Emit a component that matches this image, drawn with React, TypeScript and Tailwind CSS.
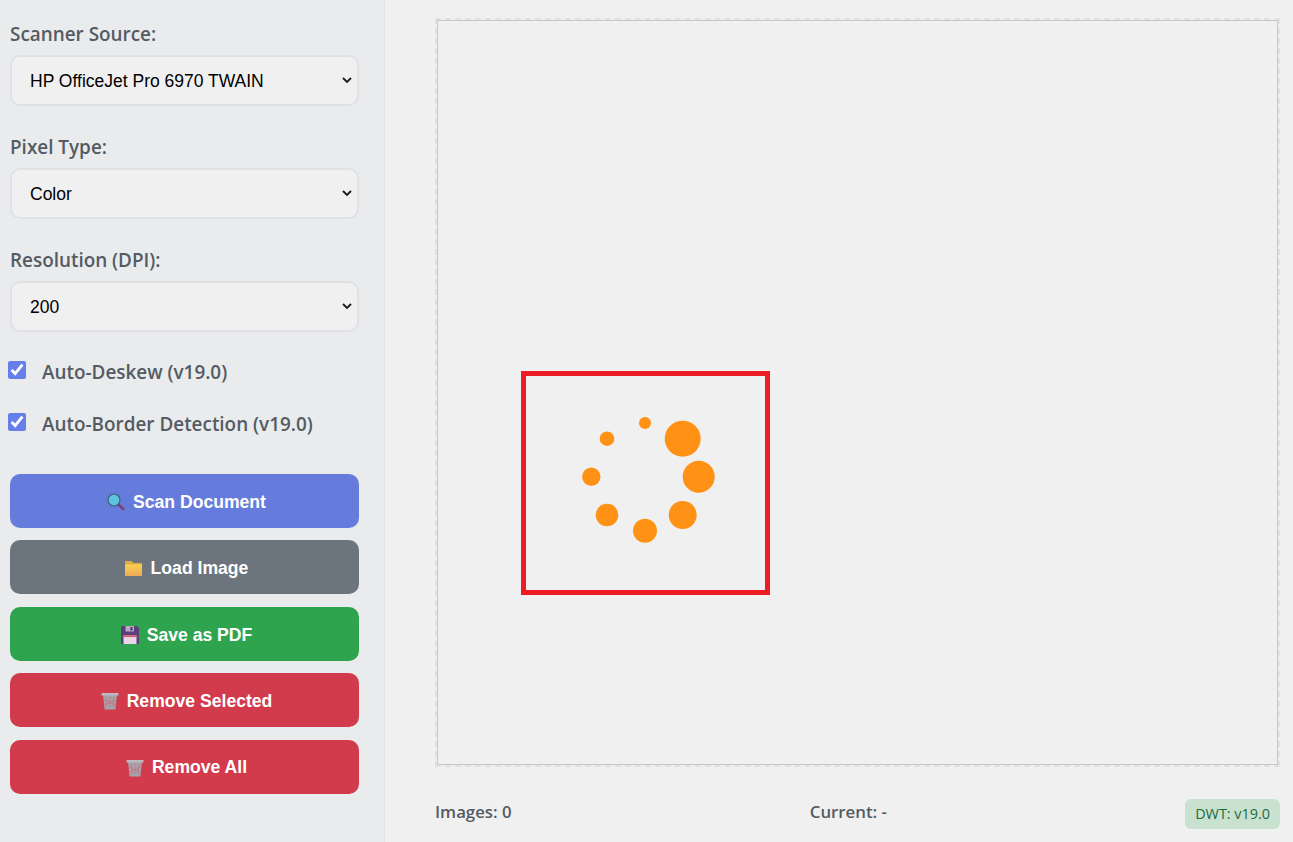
import React from 'react';

const MagnifierIcon = () => (
  <svg viewBox="0 0 18 18" className="w-[18px] h-[18px]">
    <path d="M11 11l5.400 5.200" stroke="#7c3f78" strokeWidth="2.600" strokeLinecap="round" />
    <circle cx="7" cy="7" r="6" fill="#5cc4dc" stroke="#3f5f80" strokeWidth="1.200" />
  </svg>
);

const FolderIcon = () => (
  <svg viewBox="0 0 18 16" className="w-[18px] h-4">
    <path d="M0 1h6.500l2 2H17v13H0z" fill="#e3a94f" />
    <path d="M0 4.500h17V16H0z" fill="url(#folderFill)" />
    <defs>
      <linearGradient id="folderFill" x1="0" y1="0" x2="0" y2="1">
        <stop offset="0" stopColor="#f8d24c" />
        <stop offset="1" stopColor="#efa85c" />
      </linearGradient>
    </defs>
  </svg>
);

const FloppyIcon = () => (
  <svg viewBox="0 0 18 18" className="w-[18px] h-[18px]">
    <path d="M0 1.500A1.500 1.500 0 0 1 1.500 0H16l2 2v16H0z" fill="#5b3f78" />
    <rect x="4.500" y="0" width="8.500" height="5.500" fill="#b9a9c6" />
    <rect x="9.500" y="1" width="2" height="3.500" fill="#4a3464" />
    <rect x="2.500" y="9.500" width="13" height="8.500" fill="#e6d8e6" />
    <rect x="2.500" y="9.500" width="13" height="1.600" fill="#e0596c" />
  </svg>
);

const TrashIcon = () => (
  <svg viewBox="0 0 18 18" className="w-[18px] h-[18px]">
    <path d="M2 3h14l-1.600 14.500H3.600z" fill="#a5a3a9" />
    <path d="M5 5.500l1 10M9 5.500v10M13 5.500l-1 10M3.500 8l11 5M14.500 8l-11 5" stroke="#cf6274" strokeWidth="0.900" strokeDasharray="1.500 1" />
    <rect x="0.500" y="1" width="17" height="2.600" rx="0.600" fill="#bcbac0" />
  </svg>
);

const fieldLabel = 'block pt-[1px] text-[18.900px] leading-[24px] font-semibold text-[#555b63]';
const selectBox = 'block w-full h-[51px] pl-[18px] pr-[24px] pt-[2px] rounded-[10px] border-2 border-[#dfe1e5] bg-[#f0f0f0] text-[17.500px] text-black font-["Liberation_Sans",sans-serif] appearance-none';

const Field = ({ label, value, className }: { label: string; value: string; className?: string }) => (
  <div className={className}>
    <label className={fieldLabel}>{label}</label>
    <div className="relative mt-[9px]">
      <select className={selectBox} defaultValue={value}>
        <option>{value}</option>
      </select>
      <svg viewBox="0 0 10 7" className="absolute right-[7px] top-[22px] w-[10px] h-[7px] pointer-events-none">
        <path d="M1 1l4 4 4-4" fill="none" stroke="#1a1a1a" strokeWidth="1.800" />
      </svg>
    </div>
  </div>
);

const CheckRow = ({ label, className }: { label: string; className?: string }) => (
  <label className={`flex items-center h-[24px] text-[18.900px] font-semibold text-[#555b63] ${className ?? ''}`}>
    <input type="checkbox" defaultChecked className="w-[18px] h-[18px] ml-[-2px] mb-[4px] accent-[#667eea] shrink-0" />
    <span className="ml-[16px]">{label}</span>
  </label>
);

const ActionButton = ({ icon, label, color }: { icon: React.ReactNode; label: string; color: string }) => (
  <button className={`flex items-center justify-center gap-[8px] w-full h-[54px] pl-[4px] pt-[2px] rounded-[10px] text-white text-[17.600px] font-bold font-["Liberation_Sans",sans-serif] ${color}`}>
    {icon}
    <span>{label}</span>
  </button>
);

const Spinner = () => {
  const dots = [
    [645, 423, 6],
    [682.7, 438.7, 18],
    [698.7, 476.7, 16],
    [682.7, 515, 14],
    [645, 530.7, 12],
    [607, 515, 11.3],
    [591.3, 476.7, 9.2],
    [607, 438.7, 7.3],
  ];
  return (
    <svg viewBox="526 376 239 214" className="w-full h-full">
      {dots.map(([x, y, r]) => (
        <circle key={x * y} cx={x} cy={y} r={r} fill="#ff9214" />
      ))}
    </svg>
  );
};

export default function App() {
  return (
    <div className="flex h-[842px] w-full overflow-hidden bg-[#f0f0f0] font-['Open_Sans',sans-serif]">
      <aside className="w-[385px] shrink-0 border-r border-[#dfe1e5] bg-[#e9ebed] pl-[10px] pr-[25px] pt-[21px]">
        <Field label="Scanner Source:" value="HP OfficeJet Pro 6970 TWAIN" />
        <Field label="Pixel Type:" value="Color" className="mt-[28px]" />
        <Field label="Resolution (DPI):" value="200" className="mt-[28px]" />
        <CheckRow label="Auto-Deskew (v19.0)" className="mt-[28px]" />
        <CheckRow label="Auto-Border Detection (v19.0)" className="mt-[28px]" />
        <div className="flex flex-col gap-[12.400px] mt-[38px]">
          <ActionButton icon={<MagnifierIcon />} label="Scan Document" color="bg-[#667cdc]" />
          <ActionButton icon={<FolderIcon />} label="Load Image" color="bg-[#6c757d]" />
          <ActionButton icon={<FloppyIcon />} label="Save as PDF" color="bg-[#2fa44f]" />
          <ActionButton icon={<TrashIcon />} label="Remove Selected" color="bg-[#d13b4b]" />
          <ActionButton icon={<TrashIcon />} label="Remove All" color="bg-[#d13b4b]" />
        </div>
      </aside>
      <main className="flex-1 flex flex-col pl-[50px] pr-[13px] pt-[18px]">
        <div className="relative h-[749px] border-2 border-dashed border-[#dfe1e5]">
          <div className="h-full border border-[#c8c8c8]" />
          <div className="absolute left-[84px] top-[351px] w-[249px] h-[224px] border-[5px] border-[#ed1c24]">
            <Spinner />
          </div>
        </div>
        <div className="flex items-start justify-between mt-[32px] text-[16.800px] leading-[26px] font-semibold text-[#555b63]">
          <span>Images: 0</span>
          <span>Current: -</span>
          <span className="h-[30px] px-[10px] flex items-center rounded-[6px] bg-[#c9e2d0] text-[14.400px] font-medium text-[#1e6b3c]">DWT: v19.0</span>
        </div>
      </main>
    </div>
  );
}
